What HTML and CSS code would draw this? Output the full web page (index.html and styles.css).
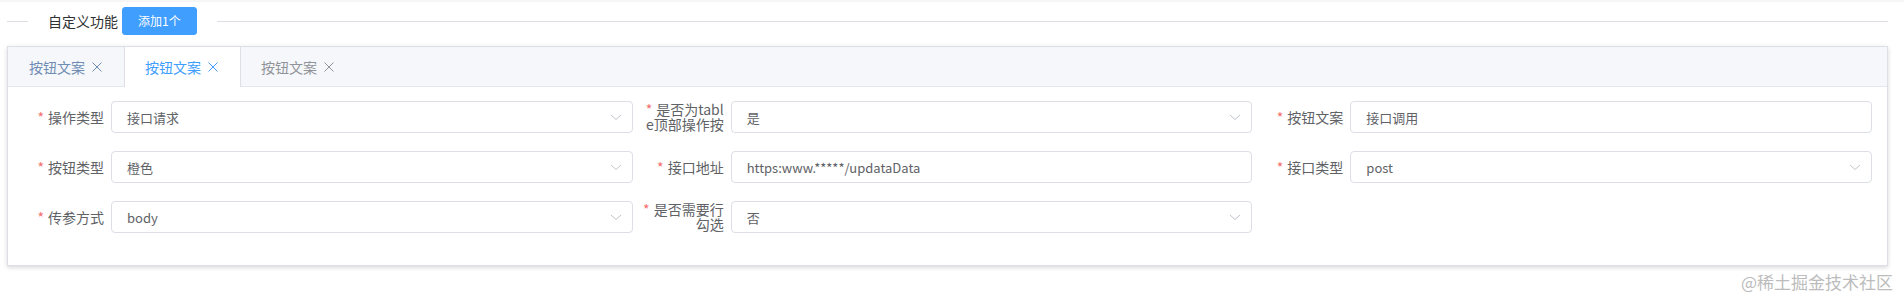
FILE: index.html
```html
<!DOCTYPE html>
<html lang="zh-CN">
<head>
<meta charset="utf-8">
<title>自定义功能</title>
<link rel="stylesheet" href="styles.css">
</head>
<body>
<div class="page">
  <div class="top-edge"></div>
  <div class="divider">
    <span class="divider-line short"></span>
    <div class="divider-text">
      <span class="divider-title">自定义功能</span>
      <button class="btn-primary" type="button">添加1个</button>
    </div>
    <span class="divider-line grow"></span>
  </div>

  <div class="tabs-card">
    <div class="tabs-header">
      <div class="tab tab-muted">按钮文案<svg class="tab-close" viewBox="0 0 14 14"><path d="M2.5 2.5 L11.5 11.5 M11.5 2.5 L2.5 11.5"/></svg></div>
      <div class="tab is-active">按钮文案<svg class="tab-close" viewBox="0 0 14 14"><path d="M2.5 2.5 L11.5 11.5 M11.5 2.5 L2.5 11.5"/></svg></div>
      <div class="tab">按钮文案<svg class="tab-close" viewBox="0 0 14 14"><path d="M2.5 2.5 L11.5 11.5 M11.5 2.5 L2.5 11.5"/></svg></div>
    </div>
    <div class="tabs-body">
      <div class="form-grid">
        <div class="form-item">
          <label class="form-label"><span class="req">*</span>操作类型</label>
          <div class="control select"><span class="value">接口请求</span><svg class="caret" viewBox="0 0 14 14"><path d="M2 5 L7 9.5 L12 5"/></svg></div>
        </div>
        <div class="form-item">
          <label class="form-label multi"><span class="req">*</span>是否为table顶部操作按</label>
          <div class="control select"><span class="value">是</span><svg class="caret" viewBox="0 0 14 14"><path d="M2 5 L7 9.5 L12 5"/></svg></div>
        </div>
        <div class="form-item">
          <label class="form-label"><span class="req">*</span>按钮文案</label>
          <div class="control"><span class="value">接口调用</span></div>
        </div>

        <div class="form-item">
          <label class="form-label"><span class="req">*</span>按钮类型</label>
          <div class="control select"><span class="value">橙色</span><svg class="caret" viewBox="0 0 14 14"><path d="M2 5 L7 9.5 L12 5"/></svg></div>
        </div>
        <div class="form-item">
          <label class="form-label"><span class="req">*</span>接口地址</label>
          <div class="control"><span class="value">https:www.*****/updataData</span></div>
        </div>
        <div class="form-item">
          <label class="form-label"><span class="req">*</span>接口类型</label>
          <div class="control select"><span class="value">post</span><svg class="caret" viewBox="0 0 14 14"><path d="M2 5 L7 9.5 L12 5"/></svg></div>
        </div>

        <div class="form-item">
          <label class="form-label"><span class="req">*</span>传参方式</label>
          <div class="control select"><span class="value">body</span><svg class="caret" viewBox="0 0 14 14"><path d="M2 5 L7 9.5 L12 5"/></svg></div>
        </div>
        <div class="form-item">
          <label class="form-label multi"><span class="req">*</span>是否需要行勾选</label>
          <div class="control select"><span class="value">否</span><svg class="caret" viewBox="0 0 14 14"><path d="M2 5 L7 9.5 L12 5"/></svg></div>
        </div>
        <div class="form-item empty"></div>
      </div>
    </div>
  </div>

  <div class="watermark">@稀土掘金技术社区</div>
</div>
</body>
</html>
```

FILE: styles.css
```css
* { box-sizing: border-box; }

html, body {
  margin: 0;
  padding: 0;
  background: #ffffff;
}

body {
  font-family: "Noto Sans CJK SC", "Noto Sans", sans-serif;
  color: #606266;
}

.page {
  position: relative;
  width: 1904px;
  height: 303px;
  padding: 0 16px 0 7px;
  overflow: hidden;
}

.top-edge {
  height: 2px;
  background: #f6f6f7;
  margin: 0 -16px 0 -7px;
}

/* divider */
.divider {
  display: flex;
  align-items: center;
  padding-top: 5px;
  height: 33px;
  margin-bottom: 11px;
}

.divider-line {
  height: 1px;
  background: #dcdfe6;
}

.divider-line.short {
  width: 21px;
}

.divider-line.grow {
  flex: 1;
}

.divider-text {
  display: flex;
  align-items: center;
  padding: 0 20px;
  gap: 4px;
}

.divider-title {
  font-size: 14px;
  color: #303133;
}

.btn-primary {
  height: 28px;
  padding: 0 15px;
  border: 1px solid #409eff;
  border-radius: 3px;
  background: #409eff;
  color: #ffffff;
  font-family: inherit;
  font-size: 12px;
  line-height: 26px;
}

/* tabs card */
.tabs-card {
  border: 1px solid #dcdfe6;
  background: #ffffff;
  box-shadow: 0 2px 4px 0 rgba(0, 0, 0, 0.12), 0 0 6px 0 rgba(0, 0, 0, 0.04);
}

.tabs-header {
  display: flex;
  align-items: flex-start;
  height: 40px;
  background: #f5f7fa;
  border-bottom: 1px solid #e4e7ed;
}

.tab {
  display: flex;
  align-items: center;
  flex-shrink: 0;
  height: 40px;
  padding: 0 20px;
  font-size: 14px;
  color: #909399;
  border-left: 1px solid transparent;
  border-right: 1px solid transparent;
}

.tab + .tab {
  margin-left: -1px;
}

.tab-muted {
  color: #6f8cb3;
}

.tab.is-active {
  background: #ffffff;
  color: #409eff;
  border-left-color: #dcdfe6;
  border-right-color: #dcdfe6;
}

.tab-close {
  width: 14px;
  height: 14px;
  margin-left: 5px;
  fill: none;
  stroke: currentColor;
  stroke-width: 1;
}

.tabs-body {
  padding: 14px 15px 32px;
}

.form-grid {
  display: grid;
  grid-template-columns: repeat(3, 1fr);
  column-gap: 10px;
  row-gap: 18px;
}

.form-item {
  display: flex;
  height: 32px;
}

.form-label {
  flex: 0 0 88px;
  height: 32px;
  padding-right: 7px;
  text-align: right;
  font-size: 14px;
  line-height: 32px;
  color: #606266;
  white-space: nowrap;
}

.form-label.multi {
  white-space: normal;
  word-break: break-all;
  line-height: 15px;
  padding-top: 1px;
}

.req {
  color: #f56c6c;
  margin-right: 4px;
}

.control {
  flex: 1;
  min-width: 0;
  display: flex;
  align-items: center;
  height: 32px;
  padding: 0 15px;
  border: 1px solid #dcdfe6;
  border-radius: 4px;
  background: #ffffff;
  font-size: 13px;
  color: #606266;
}

.control.select {
  padding-right: 9px;
}

.value {
  flex: 1;
  white-space: nowrap;
}

.caret {
  width: 14px;
  height: 14px;
  fill: none;
  stroke: #c0c4cc;
  stroke-width: 1;
}

.watermark {
  position: absolute;
  right: 11px;
  top: 272px;
  font-size: 17px;
  line-height: 20px;
  color: #bcbcbc;
}
```
